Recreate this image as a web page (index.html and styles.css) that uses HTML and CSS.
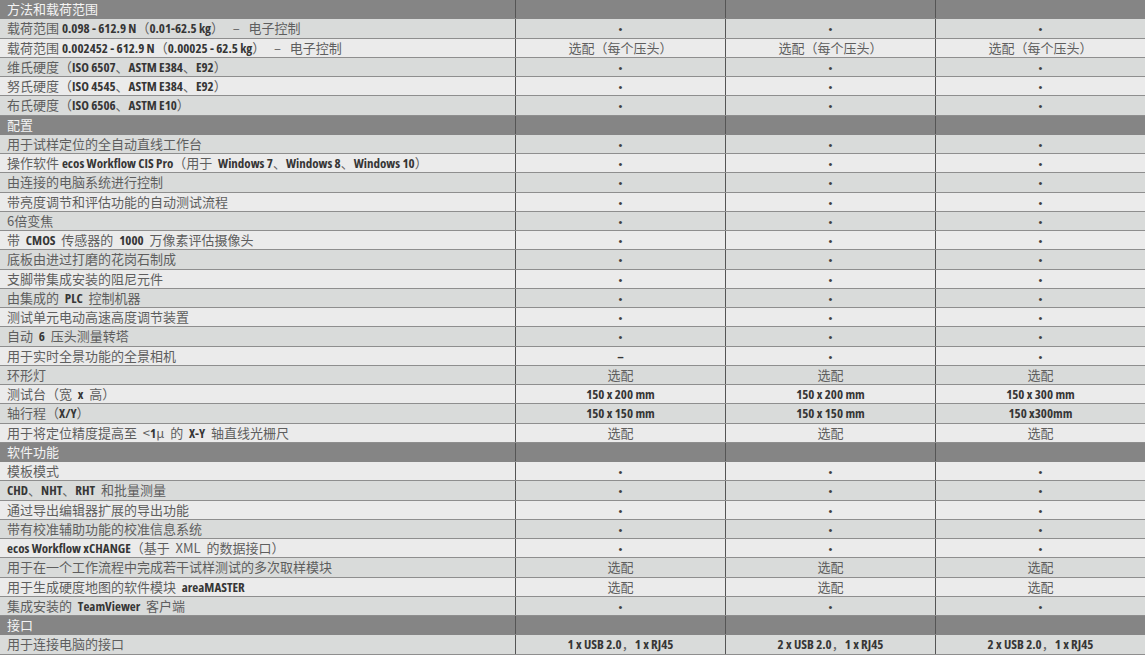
FILE: index.html
```html
<!DOCTYPE html>
<html lang="zh-CN">
<head>
<meta charset="utf-8">
<title>规格</title>
<link rel="stylesheet" href="styles.css">
</head>
<body>
<div class="table">
  <div class="row head"><div class="c name">方法和载荷范围</div><div class="c"></div><div class="c"></div><div class="c"></div></div>
  <div class="row"><div class="c name">载荷范围 <b>0.098 - 612.9 N</b>（<b>0.01-62.5 kg</b>）&nbsp;&nbsp;&nbsp;–&nbsp;&nbsp;&nbsp;电子控制</div><div class="c"><i class="dot">•</i></div><div class="c"><i class="dot">•</i></div><div class="c"><i class="dot">•</i></div></div>
  <div class="row"><div class="c name">载荷范围 <b>0.002452 - 612.9 N</b>（<b>0.00025 - 62.5 kg</b>）&nbsp;&nbsp;&nbsp;–&nbsp;&nbsp;&nbsp;电子控制</div><div class="c">选配（每个压头）</div><div class="c">选配（每个压头）</div><div class="c">选配（每个压头）</div></div>
  <div class="row"><div class="c name">维氏硬度（<b>ISO 6507</b>、<b>ASTM E384</b>、<b>E92</b>）</div><div class="c"><i class="dot">•</i></div><div class="c"><i class="dot">•</i></div><div class="c"><i class="dot">•</i></div></div>
  <div class="row"><div class="c name">努氏硬度（<b>ISO 4545</b>、<b>ASTM E384</b>、<b>E92</b>）</div><div class="c"><i class="dot">•</i></div><div class="c"><i class="dot">•</i></div><div class="c"><i class="dot">•</i></div></div>
  <div class="row"><div class="c name">布氏硬度（<b>ISO 6506</b>、<b>ASTM E10</b>）</div><div class="c"><i class="dot">•</i></div><div class="c"><i class="dot">•</i></div><div class="c"><i class="dot">•</i></div></div>
  <div class="row head"><div class="c name">配置</div><div class="c"></div><div class="c"></div><div class="c"></div></div>
  <div class="row"><div class="c name">用于试样定位的全自动直线工作台</div><div class="c"><i class="dot">•</i></div><div class="c"><i class="dot">•</i></div><div class="c"><i class="dot">•</i></div></div>
  <div class="row"><div class="c name">操作软件 <b>ecos Workflow CIS Pro</b>（用于 &nbsp;<b>Windows 7</b>、<b>Windows 8</b>、<b>Windows 10</b>）</div><div class="c"><i class="dot">•</i></div><div class="c"><i class="dot">•</i></div><div class="c"><i class="dot">•</i></div></div>
  <div class="row"><div class="c name">由连接的电脑系统进行控制</div><div class="c"><i class="dot">•</i></div><div class="c"><i class="dot">•</i></div><div class="c"><i class="dot">•</i></div></div>
  <div class="row"><div class="c name">带亮度调节和评估功能的自动测试流程</div><div class="c"><i class="dot">•</i></div><div class="c"><i class="dot">•</i></div><div class="c"><i class="dot">•</i></div></div>
  <div class="row"><div class="c name">6倍变焦</div><div class="c"><i class="dot">•</i></div><div class="c"><i class="dot">•</i></div><div class="c"><i class="dot">•</i></div></div>
  <div class="row"><div class="c name">带 &nbsp;<b>CMOS</b>&nbsp; 传感器的 &nbsp;<b>1000</b>&nbsp; 万像素评估摄像头</div><div class="c"><i class="dot">•</i></div><div class="c"><i class="dot">•</i></div><div class="c"><i class="dot">•</i></div></div>
  <div class="row"><div class="c name">底板由进过打磨的花岗石制成</div><div class="c"><i class="dot">•</i></div><div class="c"><i class="dot">•</i></div><div class="c"><i class="dot">•</i></div></div>
  <div class="row"><div class="c name">支脚带集成安装的阻尼元件</div><div class="c"><i class="dot">•</i></div><div class="c"><i class="dot">•</i></div><div class="c"><i class="dot">•</i></div></div>
  <div class="row"><div class="c name">由集成的 &nbsp;<b>PLC</b>&nbsp; 控制机器</div><div class="c"><i class="dot">•</i></div><div class="c"><i class="dot">•</i></div><div class="c"><i class="dot">•</i></div></div>
  <div class="row"><div class="c name">测试单元电动高速高度调节装置</div><div class="c"><i class="dot">•</i></div><div class="c"><i class="dot">•</i></div><div class="c"><i class="dot">•</i></div></div>
  <div class="row"><div class="c name">自动 &nbsp;<b>6</b>&nbsp; 压头测量转塔</div><div class="c"><i class="dot">•</i></div><div class="c"><i class="dot">•</i></div><div class="c"><i class="dot">•</i></div></div>
  <div class="row"><div class="c name">用于实时全景功能的全景相机</div><div class="c"><b>–</b></div><div class="c"><i class="dot">•</i></div><div class="c"><i class="dot">•</i></div></div>
  <div class="row"><div class="c name">环形灯</div><div class="c">选配</div><div class="c">选配</div><div class="c">选配</div></div>
  <div class="row"><div class="c name">测试台（宽 &nbsp;<b>x</b>&nbsp; 高）</div><div class="c"><b>150 x 200 mm</b></div><div class="c"><b>150 x 200 mm</b></div><div class="c"><b>150 x 300 mm</b></div></div>
  <div class="row"><div class="c name">轴行程（<b>X/Y</b>）</div><div class="c"><b>150 x 150 mm</b></div><div class="c"><b>150 x 150 mm</b></div><div class="c"><b>150 x300mm</b></div></div>
  <div class="row"><div class="c name">用于将定位精度提高至 &nbsp;&lt;<b>1</b>µ&nbsp; 的 &nbsp;<b>X-Y</b>&nbsp; 轴直线光栅尺</div><div class="c">选配</div><div class="c">选配</div><div class="c">选配</div></div>
  <div class="row head"><div class="c name">软件功能</div><div class="c"></div><div class="c"></div><div class="c"></div></div>
  <div class="row"><div class="c name">模板模式</div><div class="c"><i class="dot">•</i></div><div class="c"><i class="dot">•</i></div><div class="c"><i class="dot">•</i></div></div>
  <div class="row"><div class="c name"><b>CHD</b>、<b>NHT</b>、<b>RHT</b>&nbsp; 和批量测量</div><div class="c"><i class="dot">•</i></div><div class="c"><i class="dot">•</i></div><div class="c"><i class="dot">•</i></div></div>
  <div class="row"><div class="c name">通过导出编辑器扩展的导出功能</div><div class="c"><i class="dot">•</i></div><div class="c"><i class="dot">•</i></div><div class="c"><i class="dot">•</i></div></div>
  <div class="row"><div class="c name">带有校准辅助功能的校准信息系统</div><div class="c"><i class="dot">•</i></div><div class="c"><i class="dot">•</i></div><div class="c"><i class="dot">•</i></div></div>
  <div class="row"><div class="c name"><b>ecos Workflow xCHANGE</b>（基于 &nbsp;XML&nbsp; 的数据接口）</div><div class="c"><i class="dot">•</i></div><div class="c"><i class="dot">•</i></div><div class="c"><i class="dot">•</i></div></div>
  <div class="row"><div class="c name">用于在一个工作流程中完成若干试样测试的多次取样模块</div><div class="c">选配</div><div class="c">选配</div><div class="c">选配</div></div>
  <div class="row"><div class="c name">用于生成硬度地图的软件模块 &nbsp;<b>areaMASTER</b></div><div class="c">选配</div><div class="c">选配</div><div class="c">选配</div></div>
  <div class="row"><div class="c name">集成安装的 &nbsp;<b>TeamViewer</b>&nbsp; 客户端</div><div class="c"><i class="dot">•</i></div><div class="c"><i class="dot">•</i></div><div class="c"><i class="dot">•</i></div></div>
  <div class="row head"><div class="c name">接口</div><div class="c"></div><div class="c"></div><div class="c"></div></div>
  <div class="row"><div class="c name">用于连接电脑的接口</div><div class="c"><b>1 x USB 2.0</b>，<b>1 x RJ45</b></div><div class="c"><b>2 x USB 2.0</b>，<b>1 x RJ45</b></div><div class="c"><b>2 x USB 2.0</b>，<b>1 x RJ45</b></div></div>
</div>
</body>
</html>
```
FILE: styles.css
```css
html, body {
  margin: 0;
  padding: 0;
  background: #ececec;
}
body {
  font-family: "Noto Sans CJK SC", "Liberation Sans", sans-serif;
  font-size: 13px;
  color: #5e5e5e;
}
.table {
  width: 1145px;
  display: flex;
  flex-direction: column;
}
.row {
  display: grid;
  grid-template-columns: 515px 210px 210px 210px;
  height: 19.26px;
  box-sizing: border-box;
  border-bottom: 1px solid #8e8e8e;
  background: #ebebeb;
}
.row:nth-child(even) {
  background: #d9dbda;
}
.row.head {
  background: #858585;
  color: #f4f4f4;
  border-bottom-color: #858585;
}
.c {
  display: block;
  text-align: center;
  white-space: nowrap;
  line-height: 18px;
  border-left: 1px solid #555;
  overflow: hidden;
}
.c.name {
  text-align: left;
  padding-left: 7px;
  border-left: none;
}
.c b {
  font-family: "Open Sans", "Liberation Sans", sans-serif;
  font-stretch: 75%;
  font-weight: bold;
  color: #363636;
  letter-spacing: 0;
}
.dot {
  font-style: normal;
  font-family: "Liberation Sans", sans-serif;
  font-size: 11px;
  color: #3f3f3f;
}
```
